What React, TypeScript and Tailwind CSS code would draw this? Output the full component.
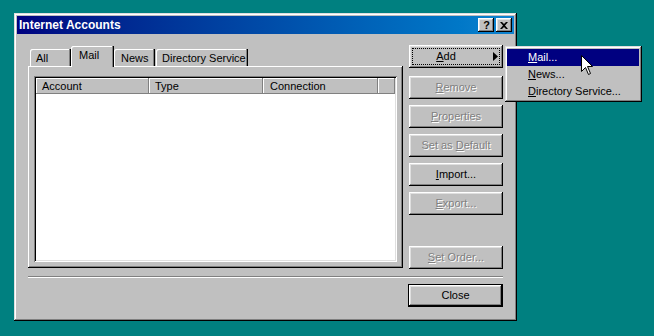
import React from "react";

const RAISED =
  "shadow-[inset_-1px_-1px_#000,inset_1px_1px_#fff,inset_-2px_-2px_#808080,inset_2px_2px_#dfdfdf]";

function U({ c }: { c: string }) {
  return <span className="underline underline-offset-[1px] decoration-1">{c}</span>;
}

function Btn({
  first,
  rest,
  disabled,
  className = "",
}: {
  first: string;
  rest: string;
  disabled?: boolean;
  className?: string;
}) {
  return (
    <div
      className={`h-[23px] w-[94px] flex items-center justify-center bg-[#c0c0c0] ${RAISED} ${className} ${
        disabled ? "text-[#808080] [text-shadow:1px_1px_0_#fff]" : "text-black"
      }`}
    >
      <span>
        <U c={first} />
        {rest}
      </span>
    </div>
  );
}

export default function App() {
  return (
    <div
      className="relative w-[654px] h-[336px] bg-[#008080] pl-[14px] pt-[13px] text-[11px] leading-[13px] text-black overflow-hidden"
      style={{ fontFamily: '"Liberation Sans", Arial, sans-serif' }}
    >
      {/* Window */}
      <div className="w-[503px] h-[308px] bg-[#c0c0c0] p-[3px] flex flex-col shadow-[inset_-1px_-1px_#000,inset_1px_1px_#dfdfdf,inset_-2px_-2px_#808080,inset_2px_2px_#fff]">
        {/* Title bar */}
        <div className="h-[18px] flex items-center justify-between pl-[2px] pr-[2px] bg-gradient-to-r from-[#000080] to-[#1084d0]">
          <span className="text-white font-bold text-[12px] leading-[14px]">Internet Accounts</span>
          <div className="flex items-center gap-[2px]">
            <div className={`w-[16px] h-[14px] bg-[#c0c0c0] flex items-center justify-center ${RAISED}`}>
              <span className="font-bold text-[11px] leading-[11px] pl-[1px]">?</span>
            </div>
            <div className={`w-[16px] h-[14px] bg-[#c0c0c0] flex items-center justify-center ${RAISED}`}>
              <svg width="8" height="7" viewBox="0 0 8 7">
                <path d="M0 0h2l2 2 2-2h2L5 3.5 8 7H6L4 5 2 7H0l3-3.5z" fill="#000" />
              </svg>
            </div>
          </div>
        </div>

        {/* Body */}
        <div className="flex-1 flex flex-col px-[11px] pt-[11px] pb-[11px]">
          <div className="flex gap-[6px] h-[224px]">
            {/* Tabs + panel */}
            <div className="w-[375px] flex flex-col pt-[1px]">
              <div className="h-[20px] flex items-end pl-[2px]">
                <div className="h-[17px] w-[41px] pl-[6px] pt-[1px] flex items-center shadow-[inset_-1px_0_#000,inset_-2px_0_#808080,inset_1px_1px_#fff] rounded-tl-[2px]">
                  All
                </div>
                <div className="relative z-10 h-[21px] w-[43px] -mb-[1px] pl-[8px] pt-[3px] bg-[#c0c0c0] shadow-[inset_-1px_0_#000,inset_-2px_0_#808080,inset_1px_1px_#fff] rounded-tl-[2px]">
                  Mail
                </div>
                <div className="h-[17px] w-[41px] pl-[7px] pt-[1px] flex items-center shadow-[inset_-1px_0_#000,inset_-2px_0_#808080,inset_1px_1px_#fff] rounded-tl-[2px]">
                  News
                </div>
                <div className="h-[17px] w-[92px] ml-[1px] pl-[6px] pt-[1px] flex items-center shadow-[inset_-1px_0_#000,inset_-2px_0_#808080,inset_1px_1px_#fff] rounded-tl-[2px]">
                  Directory Service
                </div>
              </div>
              <div className="h-[202px] pt-[10px] px-[6px] pb-[6px] shadow-[inset_-1px_-1px_#000,inset_1px_1px_#fff,inset_-2px_-2px_#808080]">
                <div className="h-full bg-white p-[2px] flex flex-col shadow-[inset_1px_1px_#808080,inset_-1px_-1px_#fff,inset_2px_2px_#000,inset_-2px_-2px_#dfdfdf]">
                  <div className="h-[16px] flex bg-[#c0c0c0]">
                    <div className="w-[113px] pl-[6px] pt-[1px] flex items-center shadow-[inset_-1px_-1px_#808080,inset_1px_1px_#fff]">
                      Account
                    </div>
                    <div className="w-[114px] pl-[6px] pt-[1px] flex items-center shadow-[inset_-1px_-1px_#808080,inset_1px_1px_#fff]">
                      Type
                    </div>
                    <div className="w-[115px] pl-[7px] pt-[1px] flex items-center shadow-[inset_-1px_-1px_#808080,inset_1px_1px_#fff]">
                      Connection
                    </div>
                    <div className="flex-1 shadow-[inset_-1px_-1px_#808080,inset_1px_1px_#fff]" />
                  </div>
                  <div className="flex-1 bg-white" />
                </div>
              </div>
            </div>

            {/* Buttons */}
            <div className="w-[94px] flex flex-col">
              <div className={`relative h-[23px] w-[94px] bg-[#c0c0c0] ${RAISED} p-[3px]`}>
                <div className="h-full w-full outline-1 outline-dotted outline-black -outline-offset-1 flex items-center justify-center pr-[20px]">
                  <span>
                    <U c="A" />
                    dd
                  </span>
                </div>
                <svg
                  className="absolute left-[84px] top-[7px]"
                  width="5"
                  height="9"
                  viewBox="0 0 5 9"
                >
                  <path d="M0 0L5 4.5L0 9Z" fill="#000" />
                </svg>
              </div>
              <Btn first="R" rest="emove" disabled className="mt-[8px]" />
              <Btn first="P" rest="roperties" disabled className="mt-[6px]" />
              <div
                className={`mt-[6px] h-[23px] w-[94px] flex items-center justify-center bg-[#c0c0c0] ${RAISED} text-[#808080] [text-shadow:1px_1px_0_#fff]`}
              >
                <span>
                  Set as <U c="D" />
                  efault
                </span>
              </div>
              <Btn first="I" rest="mport..." className="mt-[6px]" />
              <Btn first="E" rest="xport..." disabled className="mt-[6px]" />
              <Btn first="S" rest="et Order..." disabled className="mt-[31px]" />
            </div>
          </div>

          {/* Separator */}
          <div className="mt-[7px] h-[2px] w-[475px] border-t border-t-[#808080] border-b border-b-white" />

          {/* Close */}
          <div className="mt-[6px] flex justify-end">
            <div className="w-[95px] h-[23px] border border-black">
              <div
                className={`h-full w-full flex items-center justify-center bg-[#c0c0c0] ${RAISED}`}
              >
                Close
              </div>
            </div>
          </div>
        </div>
      </div>

      {/* Popup menu */}
      <div className="absolute left-[505px] top-[46px] w-[137px] h-[56px] bg-[#c0c0c0] pl-[2px] pr-[3px] pt-[3px] shadow-[inset_-1px_-1px_#000,inset_1px_1px_#dfdfdf,inset_-2px_-2px_#808080,inset_2px_2px_#fff]">
        <div className="h-[17px] pl-[21px] flex items-center bg-[#000080] text-white">
          <span>
            <U c="M" />
            ail...
          </span>
        </div>
        <div className="h-[17px] pl-[21px] flex items-center">
          <span>
            <U c="N" />
            ews...
          </span>
        </div>
        <div className="h-[17px] pl-[21px] flex items-center">
          <span>
            <U c="D" />
            irectory Service...
          </span>
        </div>
      </div>

      {/* Cursor */}
      <svg
        className="absolute left-[581px] top-[55px]"
        width="13"
        height="21"
        viewBox="0 0 13 21"
      >
        <path
          d="M0.5 0.5L0.5 16.5L4.5 12.5L7.5 19.5L9.5 18.5L6.5 11.5L11.5 11.5Z"
          fill="#fff"
          stroke="#000"
          strokeWidth="1"
        />
      </svg>
    </div>
  );
}
